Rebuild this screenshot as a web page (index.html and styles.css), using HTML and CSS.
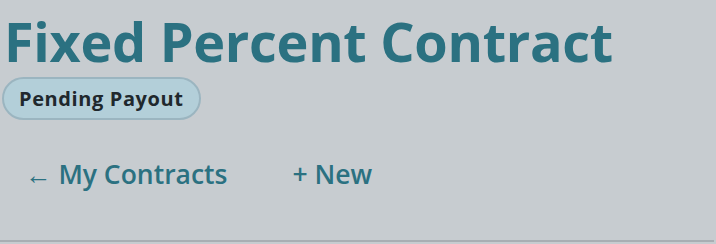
FILE: index.html
```html
<!DOCTYPE html>
<html lang="en">
<head>
    <meta charset="UTF-8">
    <title>Fixed Percent Contract</title>
    <link rel="stylesheet" href="styles.css">
</head>
<body>
    <div class="page">
        <h1 class="title">Fixed Percent Contract</h1>
        <span class="badge">Pending Payout</span>
        <nav class="links">
            <a href="#" class="link">&larr; My Contracts</a>
            <a href="#" class="link">+ New</a>
        </nav>
    </div>
</body>
</html>
```

FILE: styles.css
```css
body {
    font-family: "Open Sans", "Noto Sans", sans-serif;
    margin: 0;
    background-color: #c7ccd0;
    height: 244px;
    overflow: hidden;
}
.page {
    margin-right: 2px;
    padding: 0 2px;
    height: 240px;
    border-bottom: 2px solid #a9aeb3;
}
.title {
    margin: 0;
    padding: 5px 0 0 2px;
    font-size: 54px;
    font-weight: 700;
    letter-spacing: -0.3px;
    line-height: 72px;
    color: #2b7181;
}
.badge {
    display: inline-block;
    padding: 6px 15px;
    background-color: #b3cfd9;
    border: 2px solid #9bb5c0;
    border-radius: 22px;
    font-size: 20px;
    font-weight: 700;
    letter-spacing: 0.6px;
    color: #1f282d;
}
.links {
    display: flex;
    gap: 65px;
    padding: 36px 0 0 23px;
}
.link {
    font-size: 26.5px;
    font-weight: 600;
    color: #2b7181;
    text-decoration: none;
}
```
